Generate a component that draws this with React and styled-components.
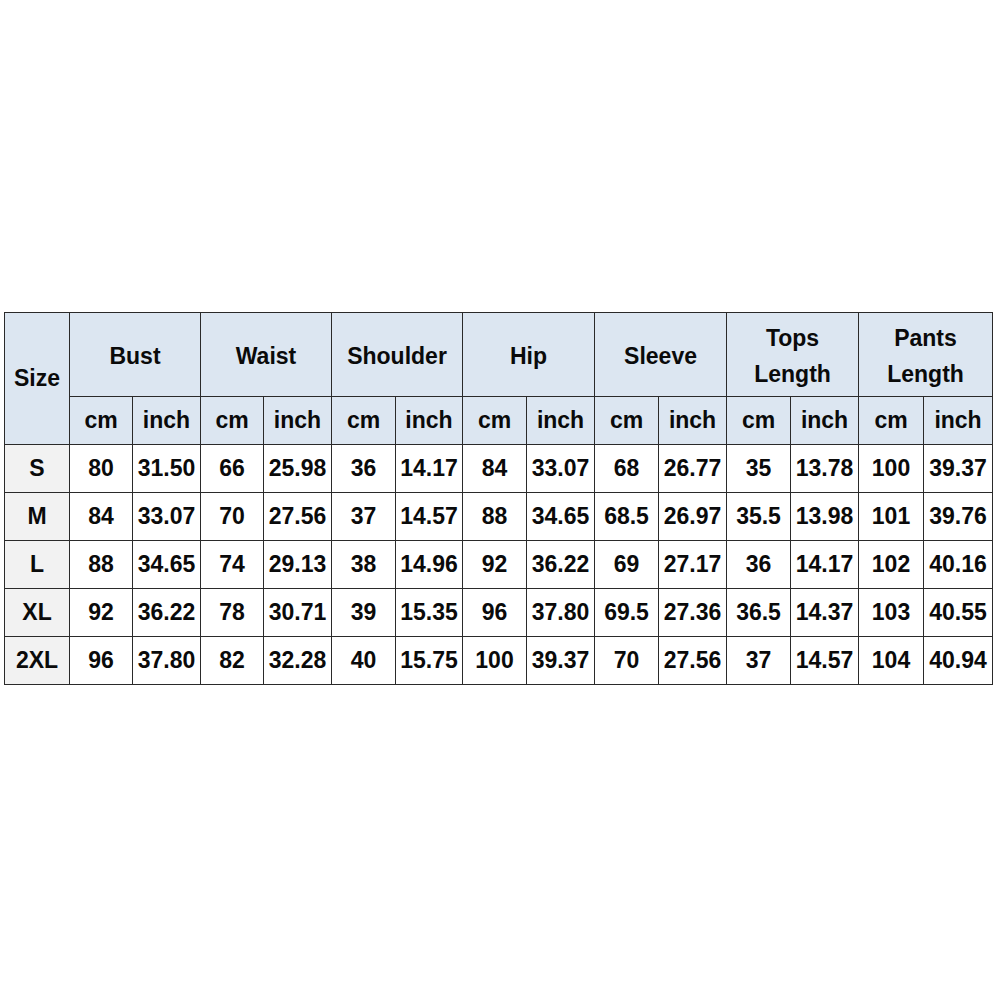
import styled, { createGlobalStyle } from "styled-components";

const GlobalStyle = createGlobalStyle`
  body {
    margin: 0;
    background: #ffffff;
    font-family: "Liberation Sans", Arial, sans-serif;
  }
`;

const groups = [
  ["Bust"],
  ["Waist"],
  ["Shoulder"],
  ["Hip"],
  ["Sleeve"],
  ["Tops", "Length"],
  ["Pants", "Length"],
];

const rows = [
  ["S", "80", "31.50", "66", "25.98", "36", "14.17", "84", "33.07", "68", "26.77", "35", "13.78", "100", "39.37"],
  ["M", "84", "33.07", "70", "27.56", "37", "14.57", "88", "34.65", "68.5", "26.97", "35.5", "13.98", "101", "39.76"],
  ["L", "88", "34.65", "74", "29.13", "38", "14.96", "92", "36.22", "69", "27.17", "36", "14.17", "102", "40.16"],
  ["XL", "92", "36.22", "78", "30.71", "39", "15.35", "96", "37.80", "69.5", "27.36", "36.5", "14.37", "103", "40.55"],
  ["2XL", "96", "37.80", "82", "32.28", "40", "15.75", "100", "39.37", "70", "27.56", "37", "14.57", "104", "40.94"],
];

const widths = [65, 63, 68, 63, 68, 64, 67, 64, 68, 64, 68, 64, 68, 65, 69];

export default function App() {
  return (
    <Page>
      <GlobalStyle />
      <Table>
        <colgroup>
          {widths.map((w, i) => (
            <col key={i} style={{ width: w }} />
          ))}
        </colgroup>
        <thead>
          <tr>
            <HeadCell rowSpan={2}>Size</HeadCell>
            {groups.map((g) => (
              <GroupCell key={g.join(" ")} colSpan={2}>
                {g.map((line) => (
                  <Line key={line}>{line}</Line>
                ))}
              </GroupCell>
            ))}
          </tr>
          <tr>
            {groups.map((g) => [
              <HeadCell key={g[0] + "cm"}>cm</HeadCell>,
              <HeadCell key={g[0] + "in"}>inch</HeadCell>,
            ])}
          </tr>
        </thead>
        <tbody>
          {rows.map((r) => (
            <tr key={r[0]}>
              <SizeCell>{r[0]}</SizeCell>
              {r.slice(1).map((v, i) => (
                <Cell key={i}>{v}</Cell>
              ))}
            </tr>
          ))}
        </tbody>
      </Table>
    </Page>
  );
}

const Page = styled.div`
  padding: 312px 0 0 4px;
`;

const Table = styled.table`
  border-collapse: collapse;
  table-layout: fixed;
  width: 989px;
  font-size: 23px;
  font-weight: 700;
  color: #0a0a0a;

  td,
  th {
    border: 1.5px solid #2a2a2a;
    padding: 0;
    text-align: center;
    vertical-align: middle;
    white-space: nowrap;
  }
`;

const HeadCell = styled.th`
  background: #dce6f1;
  height: 47px;
`;

const GroupCell = styled.th`
  background: #dce6f1;
  height: 80px;
  padding-top: 3px !important;
`;

const Line = styled.div`
  line-height: 36px;
`;

const SizeCell = styled.td`
  background: #f2f2f2;
  height: 47px;
`;

const Cell = styled.td`
  background: #ffffff;
  height: 47px;
`;
